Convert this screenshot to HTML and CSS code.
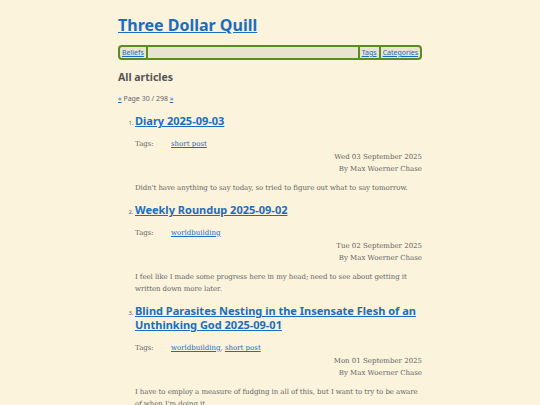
FILE: index.html
```html
<!DOCTYPE html>
<html lang="en">
<head>
    <meta charset="UTF-8">
    <meta name="viewport" content="width=device-width, initial-scale=1.0">
    <title>All articles - Three Dollar Quill</title>
    <link rel="stylesheet" href="styles.css">
</head>
<body>
    <div class="page">
        <h1 class="site-title"><a href="#">Three Dollar Quill</a></h1>

        <nav class="site-nav">
            <a href="#">Beliefs</a>
            <span class="spacer"></span>
            <a href="#">Tags</a>
            <a href="#">Categories</a>
        </nav>

        <h2 class="section-title">All articles</h2>

        <p class="pager"><a href="#">«</a> Page 30 / 298 <a href="#">»</a></p>

        <ol class="articles" start="1">
            <li class="article">
                <h3 class="article-title"><a href="#">Diary 2025-09-03</a></h3>
                <div class="tags"><span class="tags-label">Tags:</span><span><a href="#">short post</a></span></div>
                <div class="meta">
                    <div>Wed 03 September 2025</div>
                    <div>By Max Woerner Chase</div>
                </div>
                <p class="summary">Didn't have anything to say today, so tried to figure out what to say tomorrow.</p>
            </li>
            <li class="article">
                <h3 class="article-title"><a href="#">Weekly Roundup 2025-09-02</a></h3>
                <div class="tags"><span class="tags-label">Tags:</span><span><a href="#">worldbuilding</a></span></div>
                <div class="meta">
                    <div>Tue 02 September 2025</div>
                    <div>By Max Woerner Chase</div>
                </div>
                <p class="summary">I feel like I made some progress here in my head; need to see about getting it written down more later.</p>
            </li>
            <li class="article">
                <h3 class="article-title"><a href="#">Blind Parasites Nesting in the Insensate Flesh of an Unthinking God 2025-09-01</a></h3>
                <div class="tags"><span class="tags-label">Tags:</span><span><a href="#">worldbuilding</a>, <a href="#">short post</a></span></div>
                <div class="meta">
                    <div>Mon 01 September 2025</div>
                    <div>By Max Woerner Chase</div>
                </div>
                <p class="summary">I have to employ a measure of fudging in all of this, but I want to try to be aware of when I'm doing it.</p>
            </li>
        </ol>
    </div>
</body>
</html>
```

FILE: styles.css
```css
body {
    background-color: #fbf3dc;
    color: #666666;
    font-family: 'DejaVu Serif', serif;
    font-size: 7px;
    margin: 0;
}

a {
    color: #1a6dbf;
}

.page {
    width: 304px;
    margin: 0 auto;
}

.site-title {
    font-family: 'Noto Sans', sans-serif;
    font-size: 16px;
    line-height: 20px;
    font-weight: 700;
    margin: 15px 0 0;
}

.site-nav {
    display: flex;
    margin-top: 10px;
    height: 15px;
    box-sizing: border-box;
    border: 2px solid #5b8c1e;
    border-radius: 4px;
    background-color: #e9e3d1;
    font-family: 'Noto Sans', sans-serif;
    font-size: 7px;
    line-height: 11px;
}

.site-nav a {
    padding: 0 2px;
}

.site-nav .spacer {
    flex: 1;
    border-left: 2px solid #5b8c1e;
    border-right: 2px solid #5b8c1e;
}

.site-nav .spacer + a + a {
    border-left: 2px solid #5b8c1e;
}

.section-title {
    font-family: 'Noto Sans', sans-serif;
    font-size: 10.5px;
    line-height: 15px;
    font-weight: 700;
    color: #555555;
    margin: 10px 0 0;
}

.pager {
    font-family: 'Noto Sans', sans-serif;
    font-size: 7px;
    line-height: 11px;
    margin: 8px 0 0;
}

.articles {
    margin: 10px 0 0;
    padding-left: 17px;
    font-family: 'Noto Sans', sans-serif;
    font-size: 6px;
}

.article {
    margin-bottom: 9px;
}

.article-title {
    font-family: 'Noto Sans', sans-serif;
    font-size: 11px;
    line-height: 14px;
    font-weight: 700;
    margin: 0;
}

.tags,
.meta,
.summary {
    font-family: 'DejaVu Serif', serif;
    font-size: 7px;
    line-height: 12px;
}

.tags {
    display: flex;
    margin-top: 10px;
}

.tags-label {
    width: 36px;
}

.meta {
    margin-top: 1px;
    text-align: right;
}

.summary {
    margin: 7px 0 0;
    letter-spacing: -0.06px;
}
```
